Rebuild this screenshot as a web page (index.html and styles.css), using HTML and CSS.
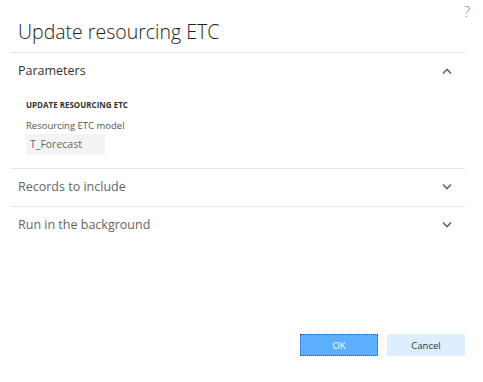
FILE: index.html
```html
<!DOCTYPE html>
<html lang="en">
<head>
    <meta charset="UTF-8">
    <title>Update resourcing ETC</title>
    <link rel="stylesheet" href="styles.css">
</head>
<body>
    <div class="dialog">
        <div class="help-row">
            <span class="help">?</span>
        </div>
        <h1 class="title">Update resourcing ETC</h1>

        <div class="section">
            <div class="section-header">
                <span class="section-title dark">Parameters</span>
                <svg class="chevron" width="10" height="6" viewBox="0 0 10 6"><path d="M1 5.5 L5 1.5 L9 5.5" fill="none" stroke="#666" stroke-width="1.6"/></svg>
            </div>
            <div class="section-body">
                <div class="group-label">UPDATE RESOURCING ETC</div>
                <label class="field-label" for="etc-model">Resourcing ETC model</label>
                <div class="field" id="etc-model">T_Forecast</div>
            </div>
        </div>

        <div class="section">
            <div class="section-header">
                <span class="section-title">Records to include</span>
                <svg class="chevron" width="10" height="6" viewBox="0 0 10 6"><path d="M1 0.5 L5 4.5 L9 0.5" fill="none" stroke="#666" stroke-width="1.6"/></svg>
            </div>
        </div>

        <div class="section last">
            <div class="section-header">
                <span class="section-title">Run in the background</span>
                <svg class="chevron" width="10" height="6" viewBox="0 0 10 6"><path d="M1 0.5 L5 4.5 L9 0.5" fill="none" stroke="#666" stroke-width="1.6"/></svg>
            </div>
        </div>

        <div class="buttons">
            <button class="btn primary">OK</button>
            <button class="btn">Cancel</button>
        </div>
    </div>
</body>
</html>
```

FILE: styles.css
```css
body {
    margin: 0;
    background: #fff;
    font-family: "Open Sans", "Noto Sans", sans-serif;
    color: #333;
}
.dialog {
    width: 454px;
    height: 382px;
    margin-left: 11px;
    display: flex;
    flex-direction: column;
}
.help-row {
    display: flex;
    justify-content: flex-end;
    height: 17px;
}
.help {
    font-size: 15px;
    font-weight: 300;
    color: #888;
    margin-right: -5px;
    margin-top: 3px;
    line-height: 16px;
}
.title {
    margin: 0;
    padding: 1px 0 0 7px;
    height: 34px;
    font-size: 19.5px;
    font-weight: 300;
    line-height: 28px;
    color: #222;
}
.section {
    border-top: 1px solid #e5e5e5;
}
.section-header {
    box-sizing: border-box;
    height: 37px;
    padding: 0 13px 2px 7px;
    display: flex;
    align-items: center;
    justify-content: space-between;
}
.section-title {
    font-size: 12.5px;
    color: #666;
}
.section-title.dark {
    color: #333;
}
.chevron {
    display: block;
}
.section-body {
    padding: 9px 0 13px 15px;
}
.group-label {
    font-size: 8px;
    font-weight: 700;
    color: #333;
    line-height: 12px;
}
.field-label {
    display: block;
    margin-top: 8px;
    font-size: 9.5px;
    color: #555;
    line-height: 14px;
}
.field {
    margin-top: 1px;
    width: 75px;
    height: 21px;
    padding-left: 4px;
    background: #f3f3f3;
    font-size: 10.5px;
    line-height: 21px;
    color: #666;
}
.buttons {
    margin-top: auto;
    margin-bottom: 26px;
    display: flex;
    justify-content: flex-end;
    gap: 9px;
}
.btn {
    width: 78px;
    height: 22px;
    border: 1px solid #ddeeff;
    background: #ddeeff;
    color: #333;
    font-family: "Open Sans", "Noto Sans", sans-serif;
    font-size: 9.5px;
    padding: 0;
}
.btn.primary {
    background: #5cb0ff;
    border: 1px dotted #1a5fa8;
    color: #fff;
}
```
